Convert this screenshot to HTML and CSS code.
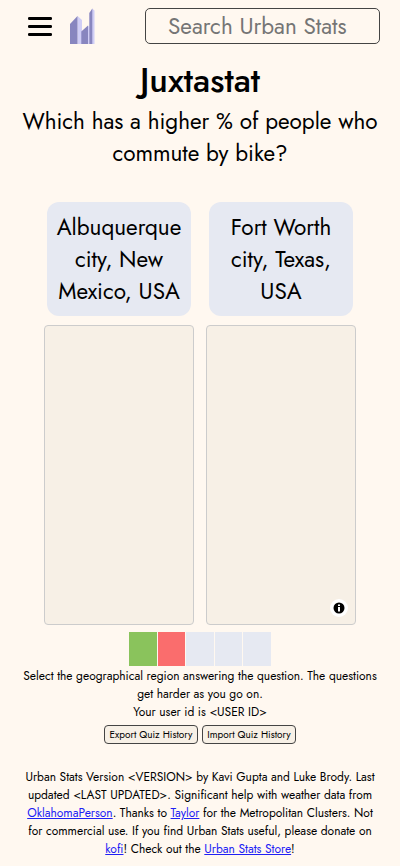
FILE: index.html
```
<!DOCTYPE html>
<html lang="en">
<head>
<meta charset="utf-8">
<title>Juxtastat</title>
<link rel="stylesheet" href="styles.css">
</head>
<body>
<header class="header">
  <svg class="menu" viewBox="0 0 24 20" aria-hidden="true"><rect width="24" height="3" rx="1.2"/><rect y="8" width="24" height="3" rx="1.2"/><rect y="16" width="24" height="3" rx="1.2"/></svg>
  <svg class="logo" viewBox="0 0 25 36" aria-hidden="true">
    <path fill="#d0cef6" d="M7.500 8 12 12V36H7.500zM18 17.500 19.500 19V36H18zM22 .5 24.500 2.500V36H22z"/>
    <path fill="#8886bf" d="M0 16 7.500 8V36H0zM11.300 23.500 18 17.500V36H11.300zM19.300 5 22.300 .5V36H19.300z"/>
  </svg>
  <input class="search" type="text" placeholder="Search Urban Stats">
</header>
<main>
  <h1 class="title">Juxtastat</h1>
  <p class="question"><span class="line">Which has a higher % of people who</span><span class="line">commute by bike?</span></p>
  <div class="choices">
    <div class="choice">
      <div class="option"><span class="line">Albuquerque</span><span class="line">city, New</span><span class="line">Mexico, USA</span></div>
      <div class="map"></div>
    </div>
    <div class="choice">
      <div class="option"><span class="line">Fort Worth</span><span class="line">city, Texas,</span><span class="line">USA</span></div>
      <div class="map">
        <svg class="info" viewBox="0 0 18 18" aria-hidden="true"><circle cx="9" cy="9" r="9" fill="#fff"/><circle cx="9" cy="9" r="5.500"/><path fill="#fff" d="M8 5.500h2v1.500H8zM8 8h2v4.500H8z"/></svg>
      </div>
    </div>
  </div>
  <div class="progress"><i class="right"></i><i class="wrong"></i><i></i><i></i><i></i></div>
  <div class="help"><span class="line">Select the geographical region answering the question. The questions</span><span class="line">get harder as you go on.</span><span class="line">Your user id is &lt;USER ID&gt;</span></div>
  <div class="actions"><button>Export Quiz History</button><button>Import Quiz History</button></div>
</main>
<footer class="footer">
  <span class="line">Urban Stats Version &lt;VERSION&gt; by Kavi Gupta and Luke Brody. Last</span>
  <span class="line">updated &lt;LAST UPDATED&gt;. Significant help with weather data from</span>
  <span class="line"><a href="#">OklahomaPerson</a>. Thanks to <a href="#">Taylor</a> for the Metropolitan Clusters. Not</span>
  <span class="line">for commercial use. If you find Urban Stats useful, please donate on</span>
  <span class="line"><a href="#">kofi</a>! Check out the <a href="#">Urban Stats Store</a>!</span>
</footer>
</body>
</html>
```
FILE: styles.css
```
* { box-sizing: border-box; }
body {
  margin: 0;
  height: 866px;
  overflow: hidden;
  background: #fff8f0;
  color: #000;
  font-family: Jost, Lato, sans-serif;
  text-align: center;
}
.line { display: block; white-space: nowrap; }
.header { display: flex; align-items: flex-start; height: 44px; padding: 8px 20px 0 28px; }
.menu { width: 24px; height: 20px; margin-top: 9px; }
.logo { width: 25px; height: 36px; margin: 0 50px 0 18px; }
.search {
  width: 235px;
  height: 36px;
  padding: 0 22px;
  border: 1px solid #444;
  border-radius: 5px;
  background: #fff8f0;
  font: 22.5px Jost, Lato, sans-serif;
}
.search::placeholder { color: #757575; opacity: 1; }
.title { margin: 14px 0 0; font-size: 34px; line-height: 46px; font-weight: 500; }
.question { margin: 0; padding-top: 1px; font-size: 22.5px; line-height: 32px; }
.choices { display: flex; justify-content: center; gap: 12px; margin-top: 33px; }
.choice { width: 150px; }
.option {
  height: 114px;
  margin: 0 3px 9px;
  padding-top: 9px;
  border-radius: 12px;
  background: #e6e9f2;
  font-size: 22.5px;
  line-height: 32px;
}
.map {
  display: flex;
  align-items: flex-end;
  justify-content: flex-end;
  height: 300px;
  padding: 7px;
  border: 1px solid #ccc;
  border-radius: 4px;
  background: #f7f0e6;
}
.info { width: 18px; height: 18px; }
.progress { display: flex; justify-content: center; gap: 1px; width: 142px; height: 34px; margin: 7px auto 0; }
.progress i { flex: 1; background: #e6e9f2; }
.progress .right { background: #8ac35c; }
.progress .wrong { background: #fa6d6d; }
.help { padding-top: 1px; font-size: 12px; line-height: 18px; }
.actions { display: flex; justify-content: center; gap: 4px; margin-top: 4px; }
.actions button {
  width: 94px;
  height: 19px;
  padding: 0;
  border: 1px solid #444;
  border-radius: 4px;
  background: #f7f0e6;
  color: #000;
  font: 10px Jost, Lato, sans-serif;
  white-space: nowrap;
}
.footer { margin-top: 24px; font-size: 12px; line-height: 18px; }
.footer a { color: #2020f5; text-decoration: underline; }
```
